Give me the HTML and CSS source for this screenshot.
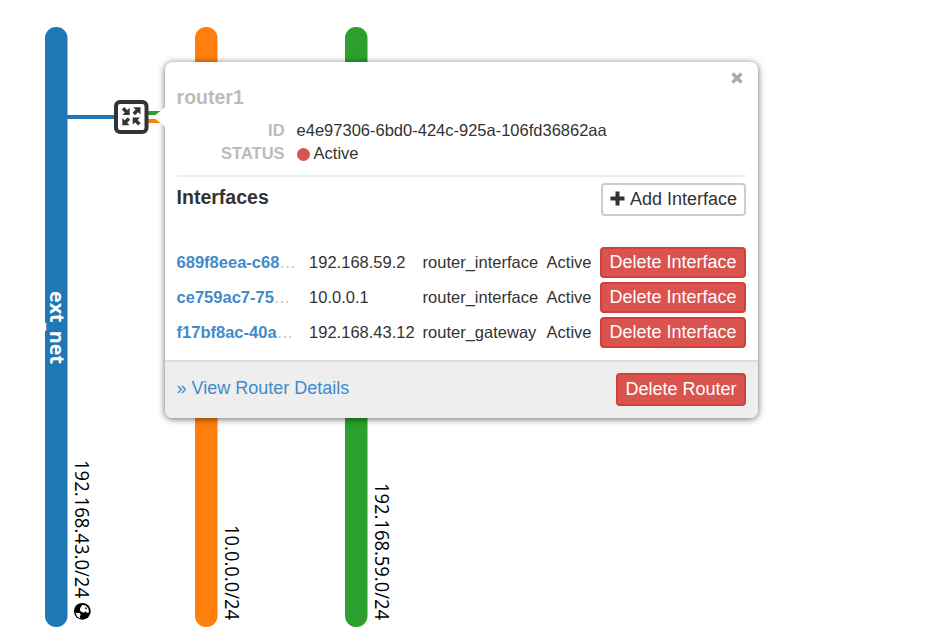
FILE: index.html
```html
<!DOCTYPE html>
<html lang="en">
<head>
<meta charset="utf-8">
<title>Network Topology</title>
<link rel="stylesheet" href="styles.css">
</head>
<body>
<main class="topology">
  <svg class="canvas" width="930" height="642" viewBox="0 0 930 642">
    <defs>
      <g id="arrow"><path d="M0 0V-7.300L-7.300 0Z" fill="#333"/><path d="M-2.500-2.500-6.700-6.700" stroke="#333" stroke-width="3.400"/></g>
    </defs>
    <rect x="45" y="27" width="22.5" height="600" rx="11" fill="#1f77b4"/>
    <rect x="195" y="27" width="22.5" height="600" rx="11" fill="#ff7f0e"/>
    <rect x="345" y="27" width="22.5" height="600" rx="11" fill="#2ca02c"/>
    <rect x="67" y="115" width="50" height="4" fill="#1f77b4"/>
    <rect x="147" y="111" width="48" height="4" fill="#2ca02c"/>
    <rect x="147" y="119" width="48" height="4" fill="#ff7f0e"/>
    <text class="net-name" transform="translate(49.5 291) rotate(90)" textLength="73" lengthAdjust="spacingAndGlyphs">ext<tspan dy="2">_</tspan><tspan dy="-2">net</tspan></text>
    <text class="cidr" transform="translate(75 460) rotate(90)" textLength="138" lengthAdjust="spacingAndGlyphs">192.168.43.0/24</text>
    <text class="cidr" transform="translate(225 525) rotate(90)" textLength="95" lengthAdjust="spacingAndGlyphs">10.0.0.0/24</text>
    <text class="cidr" transform="translate(375 483) rotate(90)" textLength="137" lengthAdjust="spacingAndGlyphs">192.168.59.0/24</text>
    <g transform="translate(82.3 611.3)">
      <circle r="8.400" fill="#000"/>
      <path d="M-2-3.500 0-6.300 3-6 6-3 6.800 1 4.500 1.800 3.500 0 1.500 1.500-1 .5-2.500-1ZM-7 1-5 2-3 1.500-1.500 3.500-2.500 5-2 7.200-5 5.500Z" fill="#fff"/>
      <path d="M3-4.500 5-2 3-2Z" fill="#000"/>
    </g>
    <rect x="116" y="102" width="30.500" height="30" rx="4" fill="#fff" stroke="#333" stroke-width="4"/>
    <use href="#arrow" transform="translate(129.700 115)"/>
    <use href="#arrow" transform="translate(140.500 107.300) rotate(-90)"/>
    <use href="#arrow" transform="translate(122.300 125.200) rotate(90)"/>
    <use href="#arrow" transform="translate(132.700 117.500) rotate(180)"/>
  </svg>

  <section class="balloon">
    <svg class="pointer" width="14" height="22" viewBox="0 0 14 22"><path d="M14 0.500 1 11 14 21.500Z" fill="#fff"/></svg>
    <button class="close" aria-label="Close"><svg width="12" height="12" viewBox="0 0 12 12"><path d="M1.500 1.500 10.500 10.500M10.500 1.500 1.500 10.500" stroke="#aaa" stroke-width="3.300"/></svg></button>
    <div class="content">
      <h3 class="name">router1</h3>
      <dl class="info">
        <dt>ID</dt><dd>e4e97306-6bd0-424c-925a-106fd36862aa</dd>
        <dt>STATUS</dt><dd><span class="dot"></span>Active</dd>
      </dl>
      <div class="section-head">
        <h4>Interfaces</h4>
        <button class="btn add"><svg width="15" height="15" viewBox="0 0 15 15"><path d="M7.500 .5V14.500M.5 7.500H14.500" stroke="#333" stroke-width="4"/></svg>Add Interface</button>
      </div>
      <div class="ports">
        <div class="port"><span class="port-id"><a>689f8eea-c68</a>…</span><span>192.168.59.2</span><span>router_interface</span><span>Active</span><button class="btn danger">Delete Interface</button></div>
        <div class="port"><span class="port-id"><a>ce759ac7-75</a>…</span><span>10.0.0.1</span><span>router_interface</span><span>Active</span><button class="btn danger">Delete Interface</button></div>
        <div class="port"><span class="port-id"><a>f17bf8ac-40a</a>…</span><span>192.168.43.12</span><span>router_gateway</span><span>Active</span><button class="btn danger">Delete Interface</button></div>
      </div>
    </div>
    <footer class="foot">
      <a>» View Router Details</a>
      <button class="btn danger large">Delete Router</button>
    </footer>
  </section>
</main>
</body>
</html>
```
FILE: styles.css
```css
* { box-sizing: border-box; }
body { margin: 0; background: #fff; color: #333; font-family: "Liberation Sans", Arial, sans-serif; }
.topology { position: relative; width: 930px; height: 642px; overflow: hidden; }
.canvas { display: block; }
.net-name { font: bold 20px "Open Sans", sans-serif; fill: #fff; }
.cidr { font: 20px "Open Sans", sans-serif; fill: #000; }

.balloon {
  position: absolute; left: 165px; top: 62px; width: 593px; height: 356px;
  display: flex; flex-direction: column;
  background: #fff; border-radius: 8px;
  box-shadow: 0 1px 7px rgba(0, 0, 0, .6);
}
.pointer { position: absolute; left: -13px; top: 44px; }
.close { position: absolute; right: 15px; top: 10px; width: 12px; height: 12px; padding: 0; border: 0; background: none; }
.close svg { display: block; }

.content { flex: 1; padding: 23px 12px 0 11.600px; }
.name { margin: 0; font-size: 19.500px; line-height: 24px; color: #bbb; }
.info {
  display: grid; grid-template-columns: 108px 1fr; column-gap: 12px;
  margin: 10px 0 0; padding-bottom: 10px; border-bottom: 2px solid #eee;
  font-size: 16.5px; line-height: 23px;
}
.info dt { text-align: right; font-weight: bold; color: #bbb; }
.info dd { margin: 0; display: flex; align-items: center; }
.dot { width: 13px; height: 13px; margin: 1px 4px 0 0; border-radius: 50%; background: #d9534f; }

.section-head { display: flex; justify-content: space-between; align-items: flex-start; padding-top: 6px; }
.section-head h4 { margin: 2px 0 0; font-size: 19.500px; line-height: 24px; }

.btn {
  display: flex; align-items: center; justify-content: center;
  padding: 0 0 2px; border-radius: 4px; white-space: nowrap;
  font-family: inherit; font-size: 18px; line-height: 22px;
}
.add { width: 145px; height: 33px; gap: 5px; border: 2px solid #ccc; background: #fff; color: #333; }
.danger { width: 146px; height: 31px; border: 2px solid #d43f3a; background: #d9534f; color: #fff; }
.large { width: 130px; height: 33px; }

.ports { display: grid; row-gap: 4px; margin-top: 31px; }
.port {
  display: grid; grid-template-columns: 132.500px 113.500px 124px 53.400px 146px;
  align-items: center; font-size: 16.5px; line-height: 22px; white-space: nowrap;
}
.port > span { margin-top: -1px; }
.port-id { font-weight: normal; color: #bbb; }
.port-id a { font-weight: bold; color: #428bca; }

.foot {
  display: flex; justify-content: space-between; align-items: flex-start;
  height: 58px; padding: 11px 12px 0 11.600px; border-top: 2px solid #ddd;
  border-radius: 0 0 8px 8px; background: #eee;
}
.foot a { margin-top: 4px; font-size: 18px; line-height: 22px; color: #428bca; }
```
